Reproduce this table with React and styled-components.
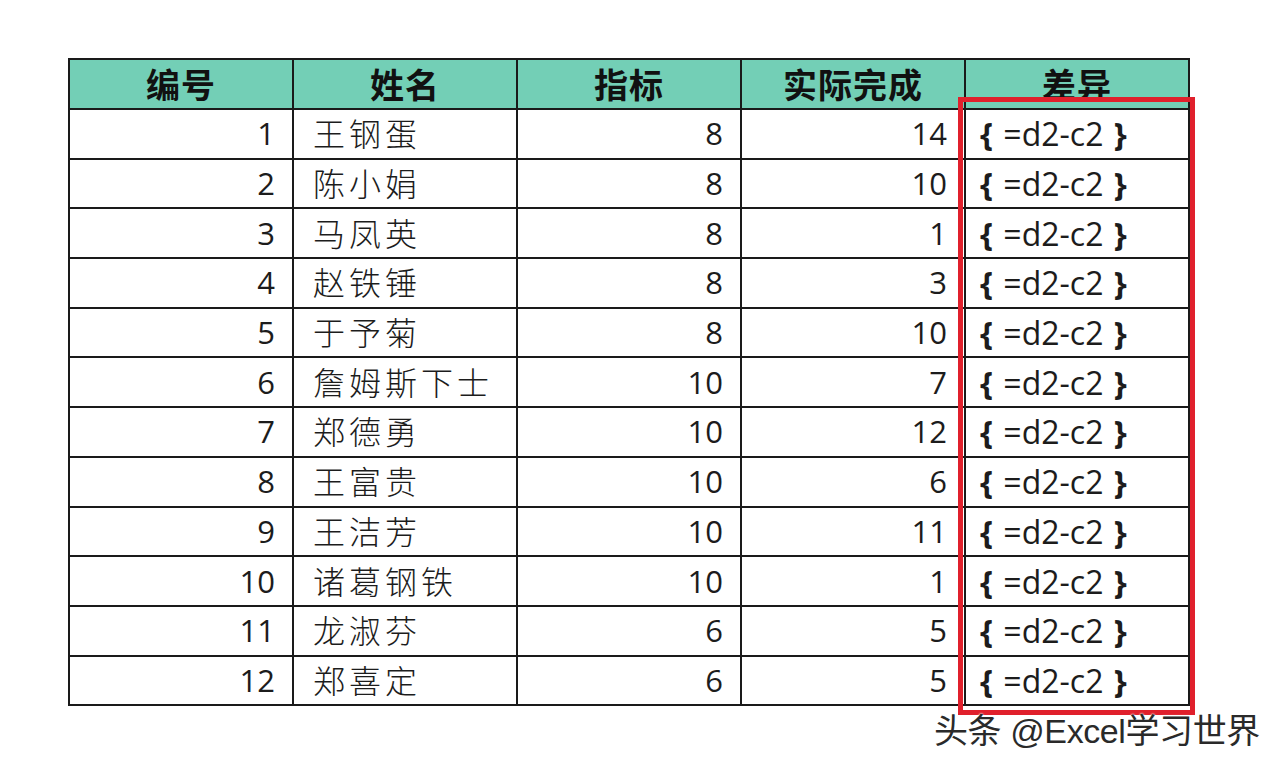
import React from "react";
import styled, { createGlobalStyle } from "styled-components";

const GlobalStyle = createGlobalStyle`
  html, body {
    margin: 0;
    padding: 0;
    background: #ffffff;
  }
`;

const Page = styled.div`
  width: 1280px;
  height: 770px;
  position: relative;
  overflow: hidden;
  background: #fff;
  padding: 58px 0 0 68px;
  box-sizing: border-box;
  font-family: "Open Sans", "Noto Sans CJK SC", sans-serif;
`;

const Sheet = styled.table`
  border-collapse: collapse;
  table-layout: fixed;
  width: 1122px;
  border: 2px solid #111;
`;

const HeadCell = styled.th`
  height: 48px;
  padding: 0;
  background: #73cfb6;
  border: 2px solid #1a1a1a;
  font-family: "Noto Sans CJK SC", sans-serif;
  font-weight: 700;
  font-size: 34px;
  letter-spacing: 1px;
  color: #111;
  text-align: center;
  vertical-align: middle;
  line-height: 1;
`;

const Cell = styled.td`
  height: ${p => (p.$cjk ? "44.7px" : "47.7px")};
  padding: ${p =>
    p.$align === "right" ? "0 17px 0 0" : p.$cjk ? "0 0 3px 19px" : "0 0 0 14px"};
  border: 2px solid #1a1a1a;
  font-size: ${p => (p.$cjk ? "32px" : "31px")};
  font-weight: ${p => (p.$cjk ? 300 : 400)};
  font-family: ${p =>
    p.$cjk ? `"Noto Sans CJK SC", sans-serif` : `"Open Sans", "Noto Sans CJK SC", sans-serif`};
  letter-spacing: ${p => (p.$cjk ? "4px" : "0")};
  color: #1c1c1c;
  text-align: ${p => p.$align || "left"};
  vertical-align: middle;
  line-height: 1;
  white-space: nowrap;
`;

const Formula = styled.span`
  font-size: 32px;
  word-spacing: 2px;
`;

const Brace = styled.span`
  font-weight: 700;
  font-size: 33px;
  font-family: "Open Sans", sans-serif;
`;

const Highlight = styled.div`
  position: absolute;
  left: 958px;
  top: 97px;
  width: 237px;
  height: 618px;
  box-sizing: border-box;
  border: 5px solid #e0202c;
  pointer-events: none;
`;

const Watermark = styled.div`
  position: absolute;
  left: 934px;
  top: 711px;
  font-family: "Liberation Sans", "Noto Sans CJK SC", sans-serif;
  font-size: 34px;
  line-height: 1.2;
  color: #2a2a2a;
  letter-spacing: -0.4px;
  text-shadow: 0 0 2px #fff, 0 0 2px #fff;
  white-space: nowrap;
`;

const rows = [
  [1, "王钢蛋", 8, 14],
  [2, "陈小娟", 8, 10],
  [3, "马凤英", 8, 1],
  [4, "赵铁锤", 8, 3],
  [5, "于予菊", 8, 10],
  [6, "詹姆斯下士", 10, 7],
  [7, "郑德勇", 10, 12],
  [8, "王富贵", 10, 6],
  [9, "王洁芳", 10, 11],
  [10, "诸葛钢铁", 10, 1],
  [11, "龙淑芬", 6, 5],
  [12, "郑喜定", 6, 5],
];

const headers = ["编号", "姓名", "指标", "实际完成", "差异"];

const App = () => {
  return (
    <>
      <GlobalStyle />
      <Page>
        <Sheet>
          <colgroup>
            {headers.map(h => (
              <col key={h} />
            ))}
          </colgroup>
          <thead>
            <tr>
              {headers.map(h => (
                <HeadCell key={h}>{h}</HeadCell>
              ))}
            </tr>
          </thead>
          <tbody>
            {rows.map(r => (
              <tr key={r[0]}>
                <Cell $align="right">{r[0]}</Cell>
                <Cell $cjk>{r[1]}</Cell>
                <Cell $align="right">{r[2]}</Cell>
                <Cell $align="right">{r[3]}</Cell>
                <Cell>
                  <Formula>
                    <Brace>{"{"}</Brace> =d2-c2 <Brace>{"}"}</Brace>
                  </Formula>
                </Cell>
              </tr>
            ))}
          </tbody>
        </Sheet>
        <Highlight />
        <Watermark>头条 @Excel学习世界</Watermark>
      </Page>
    </>
  );
};

export default App;
